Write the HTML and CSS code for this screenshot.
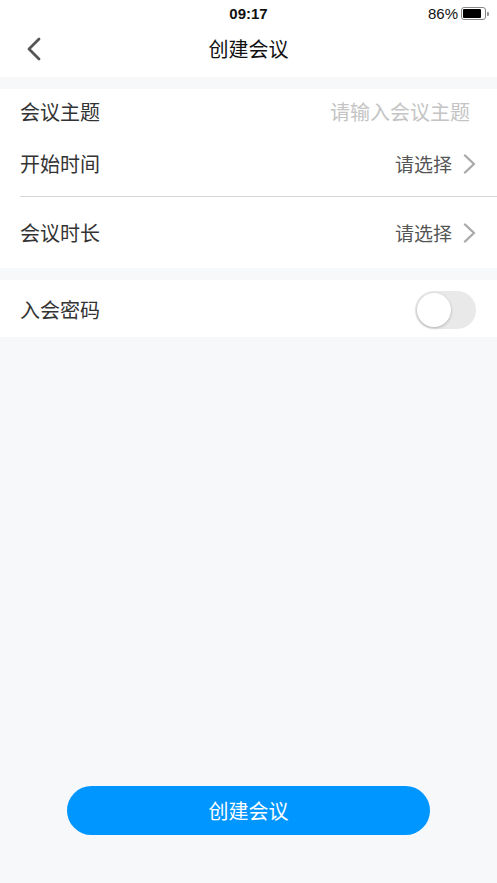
FILE: index.html
```html
<!DOCTYPE html>
<html lang="zh-CN">
<head>
    <meta charset="UTF-8">
    <meta name="viewport" content="width=device-width, initial-scale=1.0">
    <title>创建会议</title>
    <link rel="stylesheet" href="styles.css">
</head>
<body>
    <div class="page">
        <div class="status-bar">
            <span class="time">09:17</span>
            <span class="battery-wrap">
                <span class="battery-text">86%</span>
                <span class="battery"><span class="battery-level"></span></span>
                <span class="battery-tip"></span>
            </span>
        </div>
        <div class="nav-bar">
            <span class="back">
                <svg width="16" height="24" viewBox="0 0 16 24">
                    <path d="M13 2 L3 12 L13 22" fill="none" stroke="#555" stroke-width="2.8" stroke-linecap="round" stroke-linejoin="round"/>
                </svg>
            </span>
            <h1 class="title">创建会议</h1>
        </div>

        <div class="group">
            <div class="row row-first">
                <span class="label">会议主题</span>
                <input type="text" class="value-input" placeholder="请输入会议主题">
            </div>
            <div class="row row-mid">
                <span class="label">开始时间</span>
                <span class="value">请选择
                    <svg class="arrow" width="13" height="20" viewBox="0 0 13 20">
                        <path d="M2 1.5 L11 10 L2 18.5" fill="none" stroke="#aaa" stroke-width="2.4" stroke-linecap="round" stroke-linejoin="round"/>
                    </svg>
                </span>
            </div>
            <div class="row row-last">
                <span class="label">会议时长</span>
                <span class="value">请选择
                    <svg class="arrow" width="13" height="20" viewBox="0 0 13 20">
                        <path d="M2 1.5 L11 10 L2 18.5" fill="none" stroke="#aaa" stroke-width="2.4" stroke-linecap="round" stroke-linejoin="round"/>
                    </svg>
                </span>
            </div>
        </div>

        <div class="group">
            <div class="row row-switch">
                <span class="label">入会密码</span>
                <span class="switch"><span class="knob"></span></span>
            </div>
        </div>

        <div class="spacer"></div>

        <div class="footer">
            <button class="create-btn">创建会议</button>
        </div>
    </div>
</body>
</html>
```

FILE: styles.css
```css
* {
    box-sizing: border-box;
}
body {
    margin: 0;
    padding: 0;
    font-family: "Noto Sans CJK SC", "Noto Sans", sans-serif;
    background-color: #f7f8fa;
    color: #333;
}
.page {
    width: 497px;
    height: 883px;
    display: flex;
    flex-direction: column;
}
.status-bar {
    height: 26px;
    background-color: #fff;
    display: flex;
    justify-content: center;
    align-items: center;
    position: relative;
}
.time {
    font-family: "Liberation Sans", Arial, sans-serif;
    font-weight: bold;
    font-size: 15px;
    color: #111;
}
.battery-wrap {
    position: absolute;
    right: 8px;
    top: 5px;
    display: flex;
    align-items: center;
}
.battery-text {
    font-family: "Liberation Sans", Arial, sans-serif;
    font-size: 15px;
    color: #111;
    margin-right: 3px;
}
.battery {
    width: 25px;
    height: 13px;
    border: 1px solid #888;
    border-radius: 3px;
    padding: 1px;
    display: flex;
}
.battery-level {
    width: 86%;
    background-color: #000;
    border-radius: 1px;
}
.battery-tip {
    width: 2px;
    height: 4px;
    background-color: #999;
    margin-left: 1px;
    border-radius: 0 1px 1px 0;
}
.nav-bar {
    height: 51px;
    background-color: #fff;
    display: flex;
    align-items: center;
    justify-content: center;
    position: relative;
}
.back {
    position: absolute;
    left: 26px;
    top: 11px;
}
.title {
    margin: 0;
    font-size: 20px;
    font-weight: normal;
    color: #111;
    padding-bottom: 6px;
}
.group {
    background-color: #fff;
    margin-top: 12px;
}
.row {
    display: flex;
    align-items: center;
    justify-content: space-between;
    padding: 0 21px 0 20px;
}
.row-first {
    height: 47px;
    padding-bottom: 3px;
}
.row-mid {
    height: 61px;
    margin-left: 20px;
    padding-left: 0;
    border-bottom: 1px solid #d6d6d6;
    padding-bottom: 5px;
}
.row-last {
    height: 71px;
}
.row-switch {
    height: 57px;
    padding-top: 2px;
}
.label {
    font-size: 20px;
    color: #333;
}
.value-input {
    border: none;
    outline: none;
    text-align: right;
    font-family: inherit;
    font-size: 20px;
    color: #333;
    width: 200px;
    padding: 0 6px 0 0;
    background: transparent;
}
.value-input::placeholder {
    color: #c4c4c4;
}
.value {
    font-size: 19px;
    color: #555;
    display: flex;
    align-items: center;
}
.arrow {
    margin-left: 11px;
}
.switch {
    width: 61px;
    height: 38px;
    border-radius: 19px;
    background-color: #e9e9ea;
    padding: 2px;
    display: flex;
}
.knob {
    width: 34px;
    height: 34px;
    border-radius: 50%;
    background-color: #fff;
    box-shadow: 0 1px 3px rgba(0, 0, 0, 0.25);
}
.spacer {
    flex: 1;
}
.footer {
    display: flex;
    justify-content: center;
    padding-bottom: 48px;
}
.create-btn {
    width: 363px;
    height: 49px;
    border: none;
    border-radius: 25px;
    background-color: #0096ff;
    color: #fff;
    font-family: inherit;
    font-size: 20px;
    cursor: pointer;
}
```
